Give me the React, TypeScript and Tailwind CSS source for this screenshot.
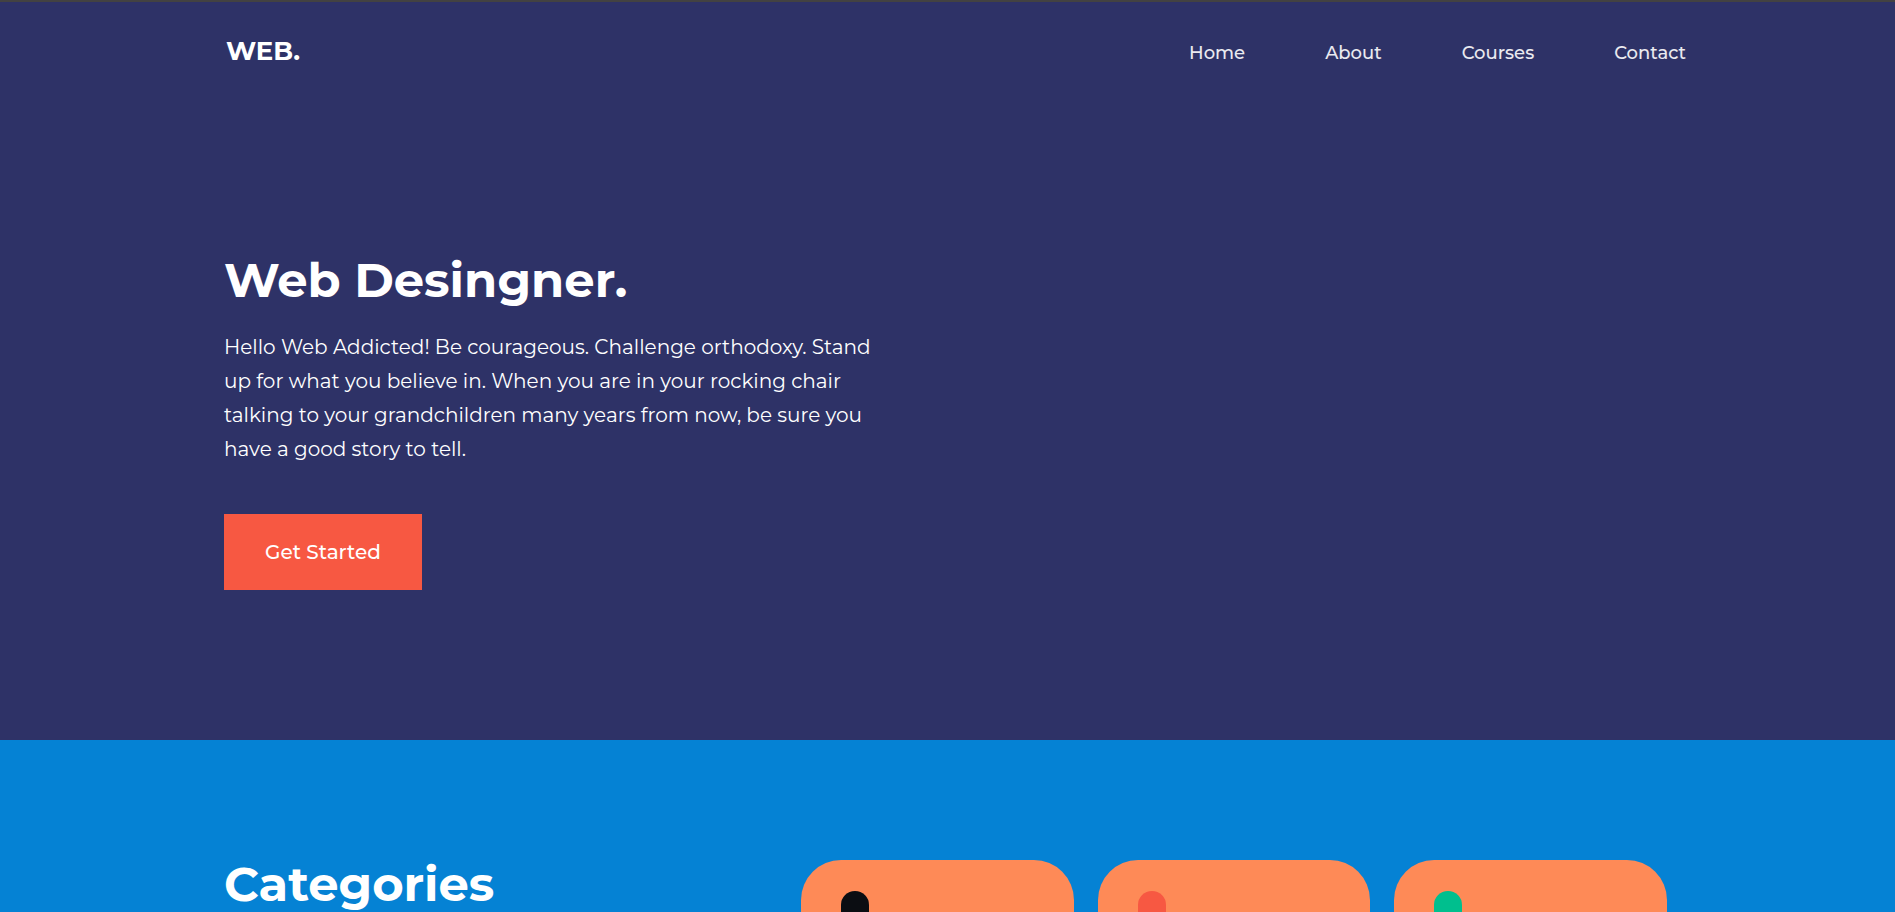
const navLinks = ["Home", "About", "Courses", "Contact"];

const categories = [
  { name: "Black", pill: "bg-[#0b0d12]" },
  { name: "Red", pill: "bg-[#f75842]" },
  { name: "Green", pill: "bg-[#00bf8e]" },
];

export default function App() {
  return (
    <div className="flex h-screen flex-col overflow-hidden border-t-2 border-[#434242] bg-[#2e3267] font-['Montserrat',Inter,sans-serif] text-white">
      <header className="flex h-[98px] shrink-0 items-center justify-between pr-[209px] pl-[226px]">
        <a href="#home" className="text-[26px] leading-8 font-bold">
          WEB.
        </a>
        <nav className="pt-1">
          <ul className="flex gap-20 text-lg leading-8 font-medium text-white/90">
            {navLinks.map((link) => (
              <li key={link}>
                <a href={`#${link.toLowerCase()}`}>{link}</a>
              </li>
            ))}
          </ul>
        </nav>
      </header>

      <main className="flex min-h-0 grow flex-col">
        <section className="shrink-0 px-56 pt-[146px] pb-[150px]">
          <h1 className="text-5xl leading-[68px] font-bold">Web Desingner.</h1>
          <p className="mt-4 mb-12 max-w-[670px] text-xl leading-[34px] text-white">
            Hello Web Addicted! Be courageous. Challenge orthodoxy. Stand up for what you believe in. When you are in
            your rocking chair talking to your grandchildren many years from now, be sure you have a good story to tell.
          </p>
          <a
            href="#courses"
            className="inline-flex h-[76px] items-center justify-center bg-[#f75842] px-[41px] text-xl font-medium"
          >
            Get Started
          </a>
        </section>

        <section className="flex min-h-0 grow items-start justify-between gap-8 overflow-hidden bg-[#0582d4] pt-30 pr-[228px] pl-56">
          <h2 className="text-5xl leading-12 font-bold">Categories</h2>
          <div className="grid w-3/5 grid-cols-3 gap-6">
            {categories.map((category) => (
              <article key={category.name} className="h-64 rounded-[40px] bg-[#fe8a57] px-10 pt-[31px]">
                <div className={`h-14 w-7 rounded-[14px] ${category.pill}`} />
              </article>
            ))}
          </div>
        </section>
      </main>
    </div>
  );
}
